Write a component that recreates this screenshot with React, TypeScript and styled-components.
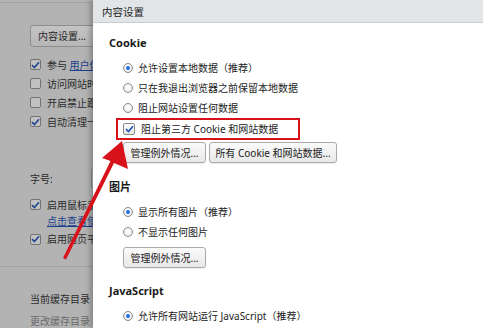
import React from "react";
import styled, { createGlobalStyle } from "styled-components";

const Global = createGlobalStyle`
  html, body { margin: 0; padding: 0; }
  body { width: 483px; height: 328px; overflow: hidden; background: #b3b3b3; }
  * { box-sizing: border-box; }
`;

const FONT = `"Noto Sans", "Noto Sans CJK SC", sans-serif`;

const Stage = styled.div`
  position: relative;
  width: 483px;
  height: 328px;
  overflow: hidden;
  display: flex;
  font-family: ${FONT};
  font-size: 10px;
`;

/* ---------- background settings page (dimmed) ---------- */
const BackPage = styled.div`
  width: 93px;
  flex: none;
  overflow: hidden;
  background: #b3b3b3;
  color: #2b2b2b;
  display: flex;
  flex-direction: column;
`;

const TopStrip = styled.div`
  height: 8px;
  border-bottom: 1px solid #a2a2a2;
  width: 100%;
`;

const BackInner = styled.div`
  width: 200px;
  padding-left: 30px;
  display: flex;
  flex-direction: column;
`;

const BackButton = styled.div`
  margin-top: 22px;
  width: 90px;
  height: 22px;
  border: 1px solid #8e8e8e;
  border-radius: 3px;
  background: linear-gradient(#c4c4c4, #b6b6b6);
  display: flex;
  align-items: center;
  padding-left: 7px;
  color: #262626;
  line-height: 14px;
`;

const BackRows = styled.div<{ $top: number }>`
  margin-top: ${(p) => p.$top}px;
  display: flex;
  flex-direction: column;
`;

const BackRow = styled.div<{ $h?: number }>`
  height: ${(p) => p.$h ?? 19}px;
  display: flex;
  align-items: center;
  gap: 6px;
  white-space: nowrap;
  line-height: 14px;
`;

const BackBox = styled.span`
  width: 11px;
  height: 11px;
  flex: none;
  border: 1px solid #737373;
  border-radius: 2px;
  background: #c2c2c2;
  display: flex;
  align-items: center;
  justify-content: center;
`;

const BackLink = styled.span`
  color: #1c3f8e;
  text-decoration: underline;
`;

const LinkLine = styled.div`
  height: 14px;
  padding-left: 17px;
  line-height: 14px;
  white-space: nowrap;
  color: #1c3f8e;
  text-decoration: underline;
`;

const FontRow = styled.div`
  margin-top: 37px;
  height: 20px;
  display: flex;
  align-items: center;
  gap: 38px;
  white-space: nowrap;
`;

const SelectStub = styled.div`
  width: 60px;
  height: 20px;
  border: 1px solid #8e8e8e;
  border-radius: 2px;
  background: #bdbdbd;
`;

const Divider = styled.div<{ $mt: number }>`
  margin-top: ${(p) => p.$mt}px;
  width: 100%;
  border-top: 1px solid #a0a0a0;
`;

const CacheLabel = styled.div`
  margin-top: 25px;
  padding-left: 30px;
  white-space: nowrap;
  line-height: 14px;
  color: #2b2b2b;
`;

const CacheLink = styled.div`
  margin-top: 8px;
  padding-left: 30px;
  white-space: nowrap;
  line-height: 14px;
  color: #6a6a6a;
`;

/* ---------- dialog ---------- */
const Dialog = styled.div`
  flex: 1;
  background: #ffffff;
  box-shadow: -3px 0 5px rgba(0, 0, 0, 0.25);
  display: flex;
  flex-direction: column;
  position: relative;
  z-index: 1;
`;

const DialogHeader = styled.div`
  height: 23px;
  flex: none;
  background: #e2e5e8;
  border-bottom: 1px solid #c9cccf;
  padding-left: 9px;
  display: flex;
  align-items: center;
  color: #222;
  font-size: 10.5px;
`;

const DialogBody = styled.div`
  padding: 11px 0 0 16px;
  display: flex;
  flex-direction: column;
  color: #222;
`;

const SectionTitle = styled.div<{ $mt?: number }>`
  margin-top: ${(p) => p.$mt ?? 0}px;
  height: 18px;
  line-height: 18px;
  font-weight: 700;
  font-size: 11px;
  color: #1a1a1a;
`;

const Options = styled.div`
  margin-top: 6px;
  padding-left: 14px;
  display: flex;
  flex-direction: column;
`;

const OptionRow = styled.div`
  height: 20px;
  display: flex;
  align-items: center;
  gap: 5px;
  white-space: nowrap;
  line-height: 14px;
`;

const Radio = styled.span<{ $on?: boolean }>`
  width: 10px;
  height: 10px;
  flex: none;
  border-radius: 50%;
  border: 1px solid #8c8c8c;
  background: radial-gradient(circle at 50% 40%, #ffffff, #e4e4e4);
  display: flex;
  align-items: center;
  justify-content: center;
  &::after {
    content: "";
    display: ${(p) => (p.$on ? "block" : "none")};
    width: 4px;
    height: 4px;
    border-radius: 50%;
    background: #1d6ee0;
  }
`;

const HighlightRow = styled.div`
  margin-left: -7px;
  width: 184px;
  height: 22px;
  border: 2px solid #d7121b;
  padding-left: 5px;
  display: flex;
  align-items: center;
  gap: 6px;
  white-space: nowrap;
  line-height: 14px;
`;

const CheckBox = styled.span`
  width: 12px;
  height: 12px;
  flex: none;
  border: 1px solid #8a8a8a;
  border-radius: 2px;
  background: linear-gradient(#ffffff, #e6e6e6);
  display: flex;
  align-items: center;
  justify-content: center;
`;

const ButtonRow = styled.div<{ $mt: number }>`
  margin-top: ${(p) => p.$mt}px;
  display: flex;
  gap: 3px;
`;

const Btn = styled.div<{ $w: number }>`
  width: ${(p) => p.$w}px;
  height: 21px;
  border: 1px solid #a9a9a9;
  border-radius: 3px;
  background: linear-gradient(#fafafa, #e8e8e8);
  box-shadow: 0 1px 1px rgba(0, 0, 0, 0.08);
  display: flex;
  align-items: center;
  justify-content: center;
  white-space: nowrap;
  color: #222;
  line-height: 14px;
`;

const Overlay = styled.svg`
  position: absolute;
  left: 0;
  top: 0;
  z-index: 5;
  pointer-events: none;
`;

const Check = ({ color }: { color: string }) => (
  <svg width="9" height="8" viewBox="0 0 9 8">
    <path d="M1 4.2 L3.4 6.6 L8 1.2" fill="none" stroke={color} strokeWidth="1.7" />
  </svg>
);

export default function App() {
  return (
    <>
      <Global />
      <Stage>
        <BackPage>
          <TopStrip />
          <BackInner>
            <BackButton>内容设置...</BackButton>
            <BackRows $top={8}>
              <BackRow>
                <BackBox><Check color="#23488f" /></BackBox>
                <span>参与 <BackLink>用户体验改进计划</BackLink></span>
              </BackRow>
              <BackRow>
                <BackBox />
                <span>访问网站时发送请求</span>
              </BackRow>
              <BackRow>
                <BackBox />
                <span>开启禁止跟踪</span>
              </BackRow>
              <BackRow>
                <BackBox><Check color="#23488f" /></BackBox>
                <span>自动清理一键</span>
              </BackRow>
            </BackRows>
            <FontRow>
              <span>字号:</span>
              <SelectStub />
            </FontRow>
            <BackRows $top={7}>
              <BackRow>
                <BackBox><Check color="#23488f" /></BackBox>
                <span>启用鼠标手势</span>
              </BackRow>
              <LinkLine>点击查看使用方法</LinkLine>
              <BackRow $h={22}>
                <BackBox><Check color="#23488f" /></BackBox>
                <span>启用网页平滑滚动</span>
              </BackRow>
            </BackRows>
          </BackInner>
          <Divider $mt={16} />
          <CacheLabel>当前缓存目录</CacheLabel>
          <CacheLink>更改缓存目录</CacheLink>
        </BackPage>

        <Dialog>
          <DialogHeader>内容设置</DialogHeader>
          <DialogBody>
            <SectionTitle>Cookie</SectionTitle>
            <Options>
              <OptionRow>
                <Radio $on />
                <span>允许设置本地数据（推荐）</span>
              </OptionRow>
              <OptionRow>
                <Radio />
                <span>只在我退出浏览器之前保留本地数据</span>
              </OptionRow>
              <OptionRow>
                <Radio />
                <span>阻止网站设置任何数据</span>
              </OptionRow>
              <HighlightRow>
                <CheckBox><Check color="#2359b4" /></CheckBox>
                <span>阻止第三方 Cookie 和网站数据</span>
              </HighlightRow>
              <ButtonRow $mt={2}>
                <Btn $w={83}>管理例外情况...</Btn>
                <Btn $w={128}>所有 Cookie 和网站数据...</Btn>
              </ButtonRow>
            </Options>
            <SectionTitle $mt={15}>图片</SectionTitle>
            <Options>
              <OptionRow>
                <Radio $on />
                <span>显示所有图片（推荐）</span>
              </OptionRow>
              <OptionRow>
                <Radio />
                <span>不显示任何图片</span>
              </OptionRow>
              <ButtonRow $mt={5}>
                <Btn $w={83}>管理例外情况...</Btn>
              </ButtonRow>
            </Options>
            <SectionTitle $mt={14}>JavaScript</SectionTitle>
            <Options>
              <OptionRow>
                <Radio $on />
                <span>允许所有网站运行 JavaScript（推荐）</span>
              </OptionRow>
            </Options>
          </DialogBody>
        </Dialog>

        <Overlay width="483" height="328" viewBox="0 0 483 328">
          <path
            d="M63 258 L66 259.5 L114 163 L128 169 L122 141 L102 158 L110.5 161 Z"
            fill="#d7121b"
          />
        </Overlay>
      </Stage>
    </>
  );
}
